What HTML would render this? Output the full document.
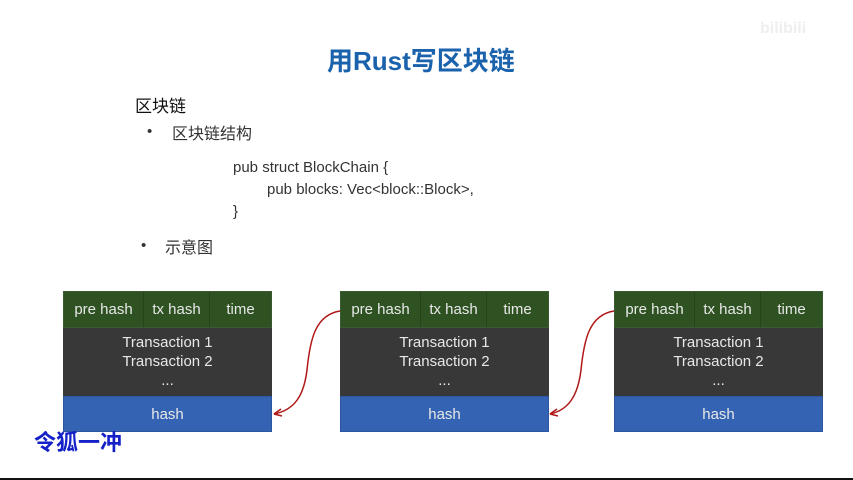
<!DOCTYPE html>
<html><head><meta charset="utf-8"><style>
body{margin:0;width:853px;height:480px;background:#fff;position:relative;overflow:hidden;font-family:"Liberation Sans","Noto Sans CJK SC",sans-serif;}
.a{position:absolute;white-space:nowrap}
.blk{position:absolute;top:291px;width:209px;height:141px;color:#e8e8e8;font-size:15px}
.hd{height:37px;background:#2e5222;display:flex;border:1px solid #3b5a33;box-sizing:border-box}
.hd div{display:flex;align-items:center;justify-content:center;border-right:1px solid #254419}
.hd div:last-child{border-right:none}
.bd{height:68px;background:#383838;text-align:center;line-height:19px;padding-top:5px;box-sizing:border-box}
.hs{height:36px;background:#3463b3;text-align:center;line-height:36px;border:1px solid #2c56a0;box-sizing:border-box}
</style></head><body>
<div class="a" style="left:327px;top:41px;font-size:26px;font-weight:bold;color:#1b62ad">用Rust写区块链</div>
<div class="a" style="left:760px;top:20px;font-size:16px;font-weight:bold;color:#eee">bilibili</div>
<div class="a" style="left:135px;top:92px;font-size:17px;color:#111">区块链</div>
<div class="a" style="left:147px;top:123px;font-size:15px;color:#333">•</div>
<div class="a" style="left:172px;top:120px;font-size:16px;color:#333">区块链结构</div>
<div class="a" style="left:233px;top:159px;font-size:15px;color:#333">pub struct BlockChain {</div>
<div class="a" style="left:267px;top:181px;font-size:15px;color:#333">pub blocks: Vec&lt;block::Block&gt;,</div>
<div class="a" style="left:233px;top:203px;font-size:15px;color:#333">}</div>
<div class="a" style="left:141px;top:237px;font-size:15px;color:#333">•</div>
<div class="a" style="left:165px;top:234px;font-size:16px;color:#333">示意图</div>

<div class="blk" style="left:63px"><div class="hd"><div style="width:79px">pre hash</div><div style="width:65px">tx hash</div><div style="flex:1">time</div></div><div class="bd">Transaction 1<br>Transaction 2<br>...</div><div class="hs">hash</div></div>
<div class="blk" style="left:340px"><div class="hd"><div style="width:79px">pre hash</div><div style="width:65px">tx hash</div><div style="flex:1">time</div></div><div class="bd">Transaction 1<br>Transaction 2<br>...</div><div class="hs">hash</div></div>
<div class="blk" style="left:614px"><div class="hd"><div style="width:79px">pre hash</div><div style="width:65px">tx hash</div><div style="flex:1">time</div></div><div class="bd">Transaction 1<br>Transaction 2<br>...</div><div class="hs">hash</div></div>

<svg class="a" style="left:0;top:0" width="853" height="480">
<path d="M340 311 C315 315,310 340,307 370 C304 395,295 410,274 414" fill="none" stroke="#b01818" stroke-width="1.5"/>
<path d="M274 414 l7 -5 M274 414 l8 2" stroke="#b01818" stroke-width="1.5"/>
<path d="M614 311 C589 315,584 340,581 370 C578 395,569 410,550 414" fill="none" stroke="#b01818" stroke-width="1.5"/>
<path d="M550 414 l7 -5 M550 414 l8 2" stroke="#b01818" stroke-width="1.5"/>
<rect x="0" y="478" width="853" height="2" fill="#111"/>
</svg>
<div class="a" style="left:34px;top:425px;font-size:22px;font-weight:bold;color:#1420c8">令狐一冲</div>
</body></html>
